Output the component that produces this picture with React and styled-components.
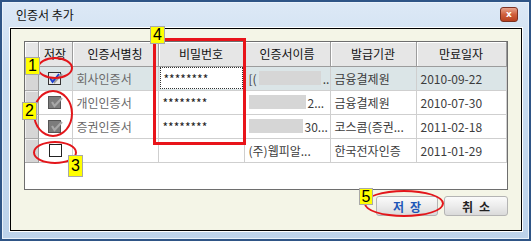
import styled, { createGlobalStyle } from "styled-components";

const GlobalStyle = createGlobalStyle`
    html, body {
        margin: 0;
        padding: 0;
        background: #ffffff;
    }
    * {
        box-sizing: border-box;
    }
`;

const FONT = `"Noto Sans CJK KR", "DejaVu Sans", sans-serif`;

const Window = styled.div`
    position: relative;
    width: 531px;
    height: 241px;
    border: 2px solid #2f5586;
    box-shadow: inset 0 0 0 1px #eaf2fa;
    background: linear-gradient(180deg, #dde9f6 0%, #c9dcf0 30%, #bcd2ea 100%);
    padding: 0 7px 8px 8px;
    display: flex;
    flex-direction: column;
    font-family: ${FONT};
`;

const TitleBar = styled.div`
    height: 26px;
    display: flex;
    align-items: center;
    justify-content: space-between;
    padding: 0 0 0 6px;
`;

const Title = styled.span`
    font-size: 12px;
    color: #111;
    margin-top: -2px;
`;

const CloseButton = styled.div`
    width: 18px;
    height: 15px;
    margin-right: 4px;
    margin-top: -2px;
    border: 1px solid #7d3222;
    border-radius: 3px;
    background: linear-gradient(180deg, #e8a48c 0%, #d0603c 50%, #b8401e 100%);
    color: #fff;
    font: bold 9px "DejaVu Sans", sans-serif;
    display: flex;
    align-items: center;
    justify-content: center;
`;

const Content = styled.div`
    flex: 1;
    border: 1px solid #000;
    box-shadow: 0 0 0 1px #ffffff;
    background: #f4f5e7;
    padding: 12px 13px 0 13px;
    display: flex;
    flex-direction: column;
`;

const GridBox = styled.div`
    height: 149px;
    background: #fff;
    border: 1px solid #6e6e6e;
    overflow: hidden;
`;

const Table = styled.table`
    border-collapse: collapse;
    table-layout: fixed;
    width: 481px;
    font-size: 12px;
`;

const HeadCell = styled.th`
    height: 24px;
    padding: 0;
    font-weight: normal;
    color: #111;
    background: #e6e6e6;
    border-right: 1px solid #9c9c9c;
    border-bottom: 1px solid #9c9c9c;
    box-shadow: inset 1px 1px 0 #ffffff;
    text-align: center;
    white-space: nowrap;
`;

const Row = styled.tr`
    background: ${(p) => (p.$selected ? "#dbe5e7" : "#ffffff")};
`;

const RowHead = styled.td`
    height: 24px;
    padding: 0;
    background: #d6d6d6;
    border-right: 1px solid #9c9c9c;
    border-bottom: 1px solid #a8a8a8;
    box-shadow: inset 1px 1px 0 #f0f0f0;
`;

const Cell = styled.td`
    height: 24px;
    padding: 0 0 0 4px;
    border-right: 1px solid #cfcfcf;
    border-bottom: 1px solid #cfcfcf;
    color: ${(p) => p.$color || "#3c3c3c"};
    white-space: nowrap;
    overflow: hidden;
    text-align: ${(p) => (p.$center ? "center" : "left")};
`;

const FocusBox = styled.div`
    height: 22px;
    margin-left: -3px;
    margin-right: 1px;
    padding-left: 3px;
    background: #fff;
    border: 1px dotted #333;
    display: flex;
    align-items: center;
`;

const NameCell = styled.div`
    display: flex;
    align-items: center;
    gap: 2px;
`;

const Blur = styled.div`
    width: ${(p) => p.$w}px;
    height: 14px;
    background: #d6d6d6;
`;

const Footer = styled.div`
    display: flex;
    justify-content: flex-end;
    gap: 6px;
    margin-top: 6px;
`;

const Button = styled.div`
    width: ${(p) => p.$w}px;
    height: 20px;
    border: 1px solid #b4b4b4;
    border-radius: 3px;
    background: linear-gradient(180deg, #fbfbfb 0%, #ececec 50%, #dadada 100%);
    color: ${(p) => (p.$primary ? "#1d56b8" : "#222")};
    font-size: 12px;
    font-weight: bold;
    letter-spacing: 6px;
    display: flex;
    align-items: center;
    justify-content: center;
    padding-left: 6px;
`;

const Overlay = styled.div`
    position: absolute;
    top: -2px;
    left: -2px;
    width: 531px;
    height: 241px;
    pointer-events: none;
`;

const Ellipse = styled.div`
    position: absolute;
    left: ${(p) => p.$x}px;
    top: ${(p) => p.$y}px;
    width: ${(p) => p.$w}px;
    height: ${(p) => p.$h}px;
    border: 2px solid #e3161b;
    border-radius: 50%;
`;

const RedBox = styled.div`
    position: absolute;
    left: 153px;
    top: 38px;
    width: 93px;
    height: 107px;
    border: 3px solid #e8141a;
`;

const Tag = styled.div`
    position: absolute;
    left: ${(p) => p.$x}px;
    top: ${(p) => p.$y}px;
    width: ${(p) => p.$w || 15}px;
    height: ${(p) => p.$h || 18}px;
    background: #ffff00;
    border: 1px solid #a8a8a8;
    font: 16px "Liberation Sans", Arial, sans-serif;
    color: #000;
    display: flex;
    align-items: center;
    justify-content: center;
`;

function CheckBox({ state }) {
    if (state === "empty") {
        return (
            <svg width="13" height="13" viewBox="0 0 13 13" style={{ display: "block", margin: "0 auto" }}>
                <rect x="0.5" y="0.5" width="12" height="12" fill="#fff" stroke="#222" />
            </svg>
        );
    }
    const active = state === "checked";
    return (
        <svg width="15" height="13" viewBox="0 0 15 13" style={{ display: "block", margin: "0 auto" }}>
            <rect x="0.5" y="0.5" width="12" height="12" fill={active ? "#e8e8e8" : "#7c7c7c"} stroke={active ? "#333" : "#555"} />
            <path d="M4 6 L6.5 10 L14 2" fill="none" stroke={active ? "#9a9a9a" : "#a8a8a8"} strokeWidth="2.2" />
            {active && <path d="M2 6 L4.5 10 L11 2" fill="none" stroke="#1a3fd0" strokeWidth="1.8" />}
        </svg>
    );
}

const rows = [
    { state: "checked", alias: "회사인증서", pw: true, pre: "[(", blur: 62, post: "..", issuer: "금융결제원", date: "2010-09-22", selected: true },
    { state: "disabled", alias: "개인인증서", pw: true, blur: 57, post: "2...", issuer: "금융결제원", date: "2010-07-30" },
    { state: "disabled", alias: "증권인증서", pw: true, blur: 54, post: "30...", issuer: "코스콤(증권...", date: "2011-02-18" },
    { state: "empty", alias: "", pw: false, name: "(주)웹피알...", issuer: "한국전자인증", date: "2011-01-29" },
];

export default function App() {
    return (
        <>
            <GlobalStyle />
            <Window>
                <TitleBar>
                    <Title>인증서 추가</Title>
                    <CloseButton>x</CloseButton>
                </TitleBar>
                <Content>
                    <GridBox>
                        <Table>
                            <colgroup>
                                <col style={{ width: 13 }} />
                                <col style={{ width: 34 }} />
                                <col style={{ width: 86 }} />
                                <col style={{ width: 86 }} />
                                <col style={{ width: 86 }} />
                                <col style={{ width: 86 }} />
                                <col style={{ width: 90 }} />
                            </colgroup>
                            <thead>
                                <tr>
                                    <HeadCell />
                                    <HeadCell>저장</HeadCell>
                                    <HeadCell>인증서별칭</HeadCell>
                                    <HeadCell>비밀번호</HeadCell>
                                    <HeadCell>인증서이름</HeadCell>
                                    <HeadCell>발급기관</HeadCell>
                                    <HeadCell>만료일자</HeadCell>
                                </tr>
                            </thead>
                            <tbody>
                                {rows.map((r, i) => (
                                    <Row key={i} $selected={r.selected}>
                                        <RowHead />
                                        <Cell $center style={{ paddingLeft: 0 }}>
                                            <CheckBox state={r.state} />
                                        </Cell>
                                        <Cell $color="#6a6a6a">{r.alias}</Cell>
                                        <Cell $color="#222">
                                            {r.pw && (r.selected ? <FocusBox>********</FocusBox> : "********")}
                                        </Cell>
                                        <Cell>
                                            {r.name ? (
                                                r.name
                                            ) : (
                                                <NameCell>
                                                    {r.pre && <span>{r.pre}</span>}
                                                    <Blur $w={r.blur} />
                                                    <span>{r.post}</span>
                                                </NameCell>
                                            )}
                                        </Cell>
                                        <Cell>{r.issuer}</Cell>
                                        <Cell>{r.date}</Cell>
                                    </Row>
                                ))}
                            </tbody>
                        </Table>
                    </GridBox>
                    <Footer>
                        <Button $w={62} $primary>저장</Button>
                        <Button $w={64}>취소</Button>
                    </Footer>
                </Content>
                <Overlay>
                    <RedBox />
                    <Ellipse $x={37} $y={57} $w={36} $h={22} />
                    <Ellipse $x={33} $y={90} $w={40} $h={47} />
                    <Ellipse $x={33} $y={141} $w={44} $h={23} />
                    <Ellipse $x={364} $y={190} $w={80} $h={27} />
                    <Tag $x={25} $y={57}>1</Tag>
                    <Tag $x={22} $y={102}>2</Tag>
                    <Tag $x={68} $y={155} $h={22}>3</Tag>
                    <Tag $x={150} $y={26}>4</Tag>
                    <Tag $x={359} $y={188} $w={14} $h={17}>5</Tag>
                </Overlay>
            </Window>
        </>
    );
}
